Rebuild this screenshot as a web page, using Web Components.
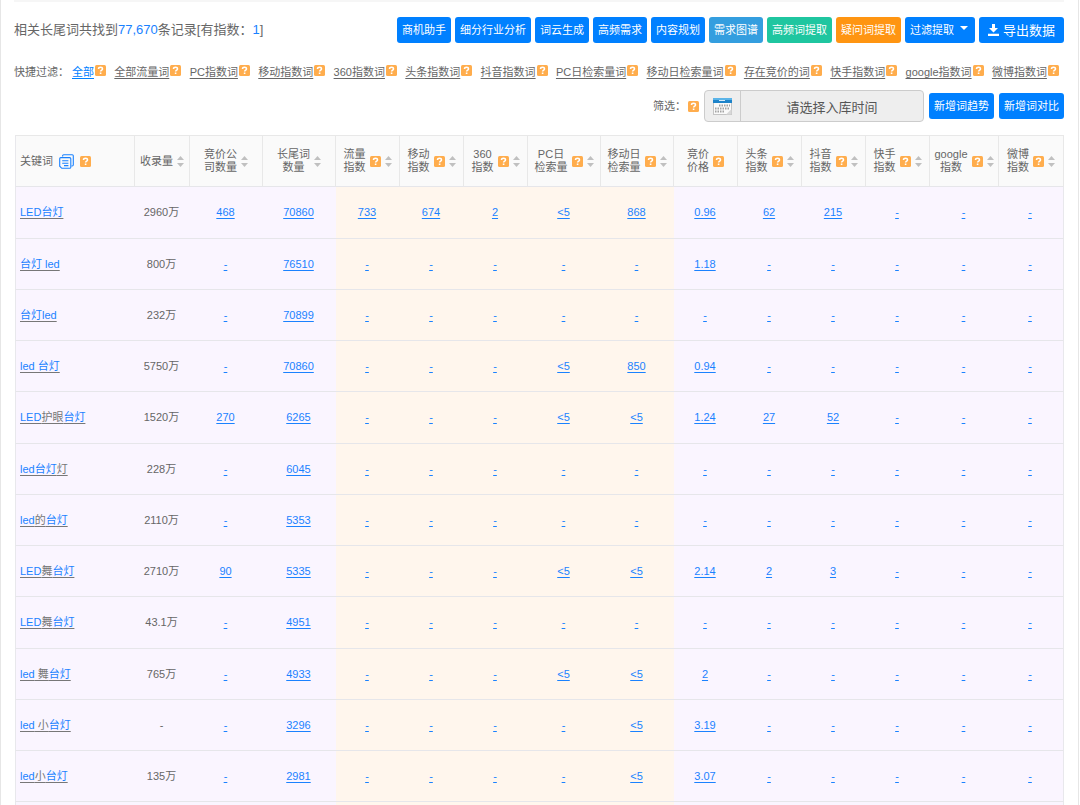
<!DOCTYPE html>
<html lang="zh-CN">
<head>
<meta charset="utf-8">
<title>相关长尾词</title>
<style>
  html, body { margin: 0; background: #fff; }
  body { font: 11px/13px "Liberation Sans", "Noto Sans CJK SC", sans-serif; color: #666; }
</style>
</head>
<body>
<keyword-page></keyword-page>

<script>
  const attach = (el, html) => { el.attachShadow({ mode: 'open' }).innerHTML = html; };

  /* Orange square with a question mark */
  class HelpIcon extends HTMLElement {
    constructor() {
      super();
      attach(this, `
        <style>
          :host { display: inline-block; width: 11px; height: 11px; flex: none; }
          svg { display: block; }
        </style>
        <svg width="11" height="11" viewBox="0 0 11 11" aria-hidden="true">
          <rect width="11" height="11" rx="1.5" fill="#ffad4d"/>
          <path d="M3.5 4.1C3.5 2.8 4.3 2.2 5.5 2.2S7.5 2.9 7.5 3.9C7.5 5.1 5.6 5.1 5.6 6.6" fill="none" stroke="#fff" stroke-width="1.5"/>
          <rect x="4.8" y="7.5" width="1.6" height="1.5" fill="#fff"/>
        </svg>`);
    }
  }
  customElements.define('help-icon', HelpIcon);

  /* Pair of grey sort arrows */
  class SortArrows extends HTMLElement {
    constructor() {
      super();
      attach(this, `
        <style>
          :host { display: inline-block; width: 7px; height: 11px; flex: none; }
          svg { display: block; }
        </style>
        <svg width="7" height="11" viewBox="0 0 7 11" aria-hidden="true">
          <path d="M3.5 0L7 4H0ZM0 7H7L3.5 11Z" fill="#c0c0c0"/>
        </svg>`);
    }
  }
  customElements.define('sort-arrows', SortArrows);

  /* Solid action button; colour comes from the tone attribute */
  class ActionButton extends HTMLElement {
    constructor() {
      super();
      attach(this, `
        <style>
          :host { display: block; --bg: #0080ff; --pad: 5px; --size: 11px; }
          :host([tone="sky"]) { --bg: #349edf; }
          :host([tone="green"]) { --bg: #1fc6a0; }
          :host([tone="orange"]) { --bg: #ff9512; }
          :host([large]) { --pad: 9px; --size: 13px; }
          button {
            display: flex; align-items: center; gap: 4px; height: 26px; padding: 0 var(--pad);
            border: 0; border-radius: 3px; background: var(--bg); color: #fff;
            font: inherit; font-size: var(--size); white-space: nowrap; cursor: pointer;
          }
        </style>
        <button type="button"><slot name="before"></slot><slot></slot><slot name="after"></slot></button>`);
    }
  }
  customElements.define('action-button', ActionButton);

  class ResultToolbar extends HTMLElement {
    constructor() {
      super();
      attach(this, `
        <style>
          :host { display: flex; justify-content: space-between; align-items: center; }
          p { margin: 0; font-size: 13px; line-height: 18px; white-space: nowrap; }
          b { font-weight: normal; color: #1a82ff; }
          nav { display: flex; gap: 4px; }
          svg { display: block; }
          .caret { align-self: flex-start; margin: 9px 2px 0 2px; }
        </style>
        <p>相关长尾词共找到<b>77,670</b>条记录[有指数：<b>1</b>]</p>
        <nav>
          <action-button>商机助手</action-button>
          <action-button>细分行业分析</action-button>
          <action-button>词云生成</action-button>
          <action-button>高频需求</action-button>
          <action-button>内容规划</action-button>
          <action-button tone="sky">需求图谱</action-button>
          <action-button tone="green">高频词提取</action-button>
          <action-button tone="orange">疑问词提取</action-button>
          <action-button>过滤提取<svg slot="after" class="caret" width="8" height="4" viewBox="0 0 8 4" aria-hidden="true"><path d="M0 0H8L4 4Z" fill="#fff"/></svg></action-button>
          <action-button large><svg slot="before" width="11" height="12" viewBox="0 0 11 12" aria-hidden="true"><path d="M4 0H7V4H10L5.5 8.6L1 4H4ZM0 9.8H11V12H0Z" fill="#fff"/></svg>导出数据</action-button>
        </nav>`);
    }
  }
  customElements.define('result-toolbar', ResultToolbar);

  class QuickFilters extends HTMLElement {
    constructor() {
      super();
      const names = ['全部', '全部流量词', 'PC指数词', '移动指数词', '360指数词', '头条指数词', '抖音指数词',
        'PC日检索量词', '移动日检索量词', '存在竞价的词', '快手指数词', 'google指数词', '微博指数词'];
      attach(this, `
        <style>
          :host { display: flex; align-items: center; white-space: nowrap; padding-right: 5px; }
          .label { margin-right: 3px; }
          ul { display: flex; flex: 1; justify-content: space-between; margin: 0; padding: 0; list-style: none; }
          li { display: flex; gap: 1px; align-items: flex-start; }
          a { color: inherit; line-height: 16px; text-decoration: underline; text-underline-offset: 2px; }
          a[aria-current] { color: #0080ff; }
          help-icon { margin-top: 1px; }
        </style>
        <span class="label">快捷过滤：</span>
        <ul>${names.map((n, i) => `<li><a href="#"${i ? '' : ' aria-current="true"'}>${n}</a><help-icon></help-icon></li>`).join('')}</ul>`);
    }
  }
  customElements.define('quick-filters', QuickFilters);

  class DateFilter extends HTMLElement {
    constructor() {
      super();
      attach(this, `
        <style>
          :host { display: flex; justify-content: flex-end; align-items: center; gap: 5px; }
          .label { display: flex; align-items: center; gap: 2px; }
          .field {
            display: flex; box-sizing: border-box; width: 220px; height: 32px;
            border: 1px solid #ccc; border-radius: 4px; background: #eee; overflow: hidden;
          }
          .icon { display: flex; align-items: center; justify-content: center; width: 35px; border-right: 1px solid #ccc; }
          input {
            flex: 1; min-width: 0; padding: 0; border: 0; background: none; color: #555;
            font: inherit; font-size: 13px; text-align: center; outline: 0;
          }
        </style>
        <span class="label"><label for="date">筛选：</label><help-icon></help-icon></span>
        <div class="field">
          <span class="icon">
            <svg width="19" height="17" viewBox="0 0 19 17" aria-hidden="true">
              <rect x=".5" y=".5" width="18" height="16" fill="#fafafa" stroke="#c4c4c4"/>
              <path d="M0 0H19V5H0Z" fill="#1d83c9"/><path d="M0 0H19V2H0Z" fill="#5bb4e8"/>
              <path d="M6 2.5H12" stroke="#d6ecfa"/>
              <path d="M6 7.5H17M2 10.5H17M2 13.5H12" stroke="#a3a3a3" stroke-width="2" stroke-dasharray="1.5 1"/>
              <path d="M13 16.5L18.5 11V16.5Z" fill="#d8d8d8"/>
            </svg>
          </span>
          <input id="date" type="text" readonly value="请选择入库时间">
        </div>
        <action-button>新增词趋势</action-button>
        <action-button>新增词对比</action-button>`);
    }
  }
  customElements.define('date-filter', DateFilter);

  /* Keywords: text in {braces} is the matched part of the phrase */
  const ROWS = [
    ['{LED台灯}', '2960万', '468', '70860', '733', '674', '2', '<5', '868', '0.96', '62', '215'],
    ['{台灯 led}', '800万', '-', '76510', '-', '-', '-', '-', '-', '1.18'],
    ['{台灯led}', '232万', '-', '70899'],
    ['{led 台灯}', '5750万', '-', '70860', '-', '-', '-', '<5', '850', '0.94'],
    ['{LED}护眼{台灯}', '1520万', '270', '6265', '-', '-', '-', '<5', '<5', '1.24', '27', '52'],
    ['{led台灯}灯', '228万', '-', '6045'],
    ['{led}的{台灯}', '2110万', '-', '5353'],
    ['{LED}舞{台灯}', '2710万', '90', '5335', '-', '-', '-', '<5', '<5', '2.14', '2', '3'],
    ['{LED}舞{台灯}', '43.1万', '-', '4951'],
    ['{led} 舞{台灯}', '765万', '-', '4933', '-', '-', '-', '<5', '<5', '2'],
    ['{led} 小{台灯}', '-', '-', '3296', '-', '-', '-', '-', '<5', '3.19'],
    ['{led}小{台灯}', '135万', '-', '2981', '-', '-', '-', '-', '<5', '3.07']
  ];
  /* label, column weight, has help, has sort */
  const COLS = [
    ['关键词', 120, 1, 0], ['收录量', 55, 0, 1], ['竞价公<br>司数量', 73, 0, 1], ['长尾词<br>数量', 73, 0, 1],
    ['流量<br>指数', 64, 1, 1], ['移动<br>指数', 64, 1, 1], ['360<br>指数', 64, 1, 1], ['PC日<br>检索量', 73, 1, 1],
    ['移动日<br>检索量', 73, 1, 1], ['竞价<br>价格', 64, 1, 0], ['头条<br>指数', 64, 1, 1], ['抖音<br>指数', 64, 1, 1],
    ['快手<br>指数', 64, 1, 1], ['google<br>指数', 69, 1, 1], ['微博<br>指数', 65, 1, 1]
  ];
  const COPY = `<svg width="15" height="15" viewBox="0 0 15 15" fill="none" stroke="#1a82ff" stroke-width="1.1" aria-hidden="true">
    <path d="M3.6 2.6V1.8Q3.6 .7 4.7 .7H13.2Q14.3 .7 14.3 1.8V10.8Q14.3 12 13.2 12H12.4"/>
    <path d="M3 3.6H10.6Q11.8 3.6 11.8 4.7V13.2Q11.8 14.3 10.6 14.3H2.8L.7 12.2V4.7Q.7 3.6 1.8 3.6ZM3.2 6.8H9.4M3.2 9.2H9.4M5 11.6H9.4"/></svg>`;

  class KeywordTable extends HTMLElement {
    constructor() {
      super();
      const esc = s => s.replace(/</g, '&lt;');
      const head = COLS.map(([t, , help, sort], i) => `<th scope="col"><div><span>${t}</span>${i ? '' : COPY}${
        help ? '<help-icon></help-icon>' : ''}${sort ? '<sort-arrows></sort-arrows>' : ''}</div></th>`).join('');
      const body = ROWS.map(r => '<tr>' + COLS.map((c, i) => {
        const v = r[i] || '-';
        if (i === 0) return `<td><a href="#">${v.replace(/{/g, '<em>').replace(/}/g, '</em>')}</a></td>`;
        return i === 1 ? `<td>${v}</td>` : `<td><a href="#">${esc(v)}</a></td>`;
      }).join('') + '</tr>').join('');
      attach(this, `
        <style>
          :host { display: block; margin-left: 1px; }
          table { width: 100%; table-layout: fixed; border-collapse: separate; border-spacing: 0; }
          th, td { box-sizing: border-box; padding: 0; border-bottom: 1px solid #e6e6ea; text-align: center; font-weight: normal; vertical-align: middle; }
          th { height: 52px; border-top: 1px solid #e8e8e8; border-right: 1px solid #e8e8e8; background: #fafafa; }
          th div { display: flex; align-items: center; justify-content: center; gap: 4px; }
          th:first-child div { justify-content: flex-start; gap: 6px; padding-left: 4px; }
          tbody tr { height: 51px; }
          tbody tr:nth-child(4n+1) { height: 52px; }
          td { padding-right: 2px; background: #faf5ff; }
          td:nth-child(n+5):nth-child(-n+9) { background: #fff6ed; }
          td:first-child { padding-left: 4px; text-align: left; }
          th:first-child, td:first-child { border-left: 1px solid #e8e8ec; }
          td:last-child { border-right: 1px solid #e8e8ec; }
          a { color: #1a82ff; text-decoration: underline; text-underline-offset: 2px; }
          td:first-child a { color: #777; }
          em { font-style: normal; color: #1a82ff; }
        </style>
        <table>
          <colgroup>${COLS.map(c => `<col style="width:${c[1]}px">`).join('')}</colgroup>
          <thead><tr>${head}</tr></thead>
          <tbody>${body}<tr>${'<td></td>'.repeat(COLS.length)}</tr></tbody>
        </table>`);
    }
  }
  customElements.define('keyword-table', KeywordTable);

  class KeywordPage extends HTMLElement {
    constructor() {
      super();
      attach(this, `
        <style>
          :host { display: block; height: 100vh; overflow: hidden; }
          main {
            box-sizing: border-box; min-height: 100%; margin-right: 1px; padding: 0 14px 0 13px;
            border: 1px solid #e6e6e6; border-width: 0 1px;
          }
          .rule { height: 2px; margin-bottom: 15px; background: #f6f6f6; }
          quick-filters { margin: 21px 0 10px; }
          date-filter { margin-bottom: 13px; }
        </style>
        <main>
          <div class="rule"></div>
          <result-toolbar></result-toolbar>
          <quick-filters></quick-filters>
          <date-filter></date-filter>
          <keyword-table></keyword-table>
        </main>`);
    }
  }
  customElements.define('keyword-page', KeywordPage);
</script>
</body>
</html>
